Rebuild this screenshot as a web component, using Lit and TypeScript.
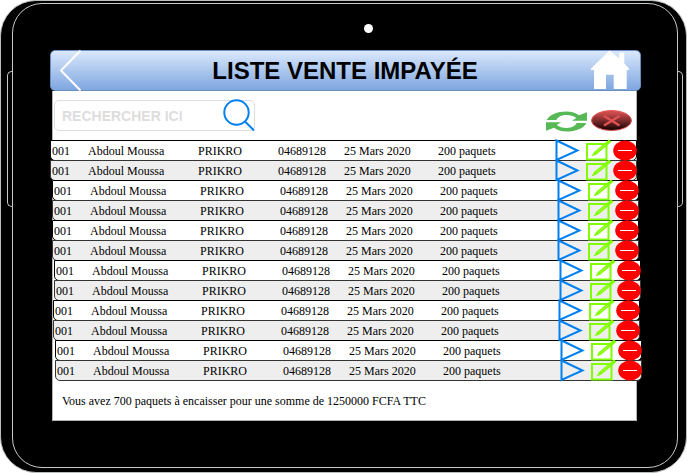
import { LitElement, html, css, svg } from "lit";
import { customElement } from "lit/decorators.js";

interface Sale {
  code: string;
  client: string;
  city: string;
  phone: string;
  date: string;
  quantity: string;
}

const sale: Sale = {
  code: "001",
  client: "Abdoul Moussa",
  city: "PRIKRO",
  phone: "04689128",
  date: "25 Mars 2020",
  quantity: "200 paquets",
};

// Each group holds two sales and is shifted right by its indent.
const groups = [0, 2, 2, 4, 3, 5].map((indent) => ({ indent, sales: [sale, sale] }));

const playIcon = html`<svg class="icon" width="24" height="21" viewBox="0 0 24 21">
  <path d="M1.5 0.5 L22.5 10.5 L1.5 20 Z" fill="none" stroke="#0080f0" stroke-width="2" />
</svg>`;

const editIcon = html`<svg class="icon" width="27" height="21" viewBox="0 0 27 21">
  <path d="M2 4 H21.5 V19.5 H2 Z" fill="none" stroke="#80ff00" stroke-width="2" />
  <path d="M6.5 16.5 L9 12 L24 -0.5 L26.5 1.8 L11.5 14.5 Z" fill="#80ff00" />
  <path d="M11 12.5 L20 5" stroke="#d5ff9c" stroke-width="0.5" />
</svg>`;

const deleteIcon = html`<svg class="icon" width="24" height="21" viewBox="0 0 24 21">
  <ellipse cx="12" cy="10.5" rx="11.8" ry="10" fill="#ff0000" />
  <path d="M5 10.5 H19" stroke="#ffffff" stroke-width="1" />
</svg>`;

const refreshArrow = svg`<path
  d="M0.7 9 C3 3.5 12 0.4 20 0.4 C26 0.4 30 1.8 33 4.2 L41 1.2 V9.7 H26 L30.3 7 C26 3.4 17 3.2 13 6 C11.5 7 10.8 8 10.4 9 Z"
  fill="#56b956" />`;

@customElement("app-root")
export class AppRoot extends LitElement {
  static styles = css`
    :host {
      display: block;
      font-family: "Liberation Serif", "Times New Roman", serif;
      font-size: 12px;
      line-height: 16px;
      color: #000;
    }
    * {
      box-sizing: border-box;
    }
    button {
      display: block;
      padding: 0;
      border: 0;
      background: none;
      cursor: pointer;
    }
    svg {
      display: block;
      overflow: visible;
    }
    .tablet {
      position: relative;
      padding: 2px 8px 4px 11px;
      border: 1px solid #b8bfb8;
      border-radius: 36px;
      background: #000;
    }
    .side {
      position: absolute;
      top: 70px;
      width: 6px;
      height: 136px;
      border: 1px solid #c8c8c8;
    }
    .side.left {
      left: 6px;
      border-right: 0;
      border-radius: 5px 0 0 5px;
    }
    .side.right {
      right: 3px;
      border-left: 0;
      border-radius: 0 5px 5px 0;
    }
    .bezel {
      padding: 20px 40px 46px 39px;
      border: 1px solid #c8c8c8;
      border-radius: 30px;
    }
    .camera {
      width: 9px;
      height: 9px;
      margin: 0 auto 17px;
      border-radius: 50%;
      background: #fff;
      position: relative;
      left: 24px;
    }
    .header {
      display: grid;
      grid-template-columns: 40px 1fr 40px;
      align-items: center;
      height: 41px;
      margin: 0 -4px 0 -2px;
      padding: 0 10px 0 9px;
      border: 1px solid #6c8ebf;
      border-radius: 5px;
      background: linear-gradient(#dae8fc, #7ea6e0);
    }
    .title {
      margin: 0;
      text-align: center;
      font: bold 24px/28px "Liberation Sans", Arial, sans-serif;
    }
    .screen {
      border: 1px solid #b3b3b3;
      border-top: 0;
      background: #fff;
    }
    .toolbar {
      display: flex;
      align-items: flex-start;
      justify-content: space-between;
      padding: 9px 4px 8px 1px;
    }
    .search {
      position: relative;
    }
    .field {
      display: block;
      width: 201px;
      height: 31px;
      padding: 0 36px 0 7px;
      border: 1px solid #ddd;
      border-radius: 5px;
      background: #fff;
      outline: 0;
      color: #000;
      font: bold 14px/16px "Liberation Sans", Arial, sans-serif;
    }
    .field::placeholder {
      color: #ddd;
      opacity: 1;
    }
    .find {
      position: absolute;
      right: 0;
      top: -1px;
    }
    .tools {
      display: flex;
      gap: 4px;
      padding-top: 10px;
    }
    .sales {
      display: block;
      margin: 0 -1px 0 -3px;
    }
    .group {
      display: block;
    }
    .sale {
      display: grid;
      grid-template-columns: 36px 110px 80px 66px 94px 1fr 80px;
      align-items: center;
      height: 21px;
      margin: 0 0 -1px;
      padding-left: 1px;
      border: 1px solid #000;
      border-radius: 0 0 5px 5px;
      background: #fff;
    }
    .sale:nth-child(even) {
      border-color: #333;
      background: #eee;
    }
    .cell {
      padding: 0;
      white-space: nowrap;
    }
    .actions {
      display: flex;
      padding: 0;
      margin: -1px;
    }
    .play {
      margin-right: 6px;
    }
    .edit {
      margin-right: 1px;
    }
    .summary {
      margin: 0;
      padding: 13px 9px 11px;
    }
  `;

  render() {
    return html`
      <div class="tablet">
        <span class="side left"></span>
        <span class="side right"></span>
        <div class="bezel">
          <div class="camera"></div>
          <header class="header">
            <button aria-label="Retour">
              <svg width="24" height="39" viewBox="0 0 24 39">
                <path d="M20.5 -0.5 L1 19.5 L20.5 39.5" fill="none" stroke="#fff" stroke-width="2" />
              </svg>
            </button>
            <h1 class="title">LISTE VENTE IMPAYÉE</h1>
            <button aria-label="Accueil">
              <svg width="40" height="39" viewBox="0 0 40 39">
                <path
                  d="M19.7 -0.5 L29.3 7.5 V1.8 H34.3 V12.5 L39 17.5 V19 H36.7 V38 H23.7 V23.7 H16 V38 H4 V19 H1 V17.5 Z"
                  fill="#fff"
                />
              </svg>
            </button>
          </header>
          <main class="screen">
            <div class="toolbar">
              <div class="search">
                <input class="field" type="text" aria-label="Rechercher" placeholder="RECHERCHER ICI" />
                <button class="find" aria-label="Lancer la recherche">
                  <svg width="33" height="33" viewBox="0 0 33 33">
                    <circle cx="14.5" cy="13.5" r="12.2" fill="none" stroke="#0080f0" stroke-width="2" />
                    <path d="M23 22.5 L32 31.5" stroke="#0080f0" stroke-width="2" />
                  </svg>
                </button>
              </div>
              <div class="tools">
                <button aria-label="Actualiser">
                  <svg width="41" height="21" viewBox="0 0 41 21">
                    ${refreshArrow}
                    <g transform="rotate(180 20.5 10.5)">${refreshArrow}</g>
                  </svg>
                </button>
                <button aria-label="Fermer">
                  <svg width="41" height="22" viewBox="0 0 41 22">
                    <defs>
                      <linearGradient id="closeFill" x1="0" y1="0" x2="0" y2="1">
                        <stop offset="0" stop-color="#e05252" />
                        <stop offset="0.2" stop-color="#bd4545" />
                        <stop offset="1" stop-color="#100000" />
                      </linearGradient>
                    </defs>
                    <ellipse cx="20.5" cy="10.5" rx="20" ry="10" fill="url(#closeFill)" stroke="#e05252" stroke-width="1" />
                    <path d="M13 6 L28.5 15.5 M28.5 6 L13 15.5" stroke="#e05252" stroke-width="2.4" />
                  </svg>
                </button>
              </div>
            </div>
            <table class="sales" aria-label="Ventes impayées">
              ${groups.map(
                ({ indent, sales }) => html`<tbody class="group" style="margin: 0 ${-indent}px 0 ${indent}px">
                  ${sales.map(
                    (s) => html`<tr class="sale">
                      <td class="cell">${s.code}</td>
                      <td class="cell">${s.client}</td>
                      <td class="cell">${s.city}</td>
                      <td class="cell">${s.phone}</td>
                      <td class="cell">${s.date}</td>
                      <td class="cell">${s.quantity}</td>
                      <td class="actions">
                        <button class="play" aria-label="Ouvrir">${playIcon}</button>
                        <button class="edit" aria-label="Modifier">${editIcon}</button>
                        <button aria-label="Supprimer">${deleteIcon}</button>
                      </td>
                    </tr>`
                  )}
                </tbody>`
              )}
            </table>
            <p class="summary">Vous avez 700 paquets à encaisser pour une somme de 1250000 FCFA TTC</p>
          </main>
        </div>
      </div>
    `;
  }
}
